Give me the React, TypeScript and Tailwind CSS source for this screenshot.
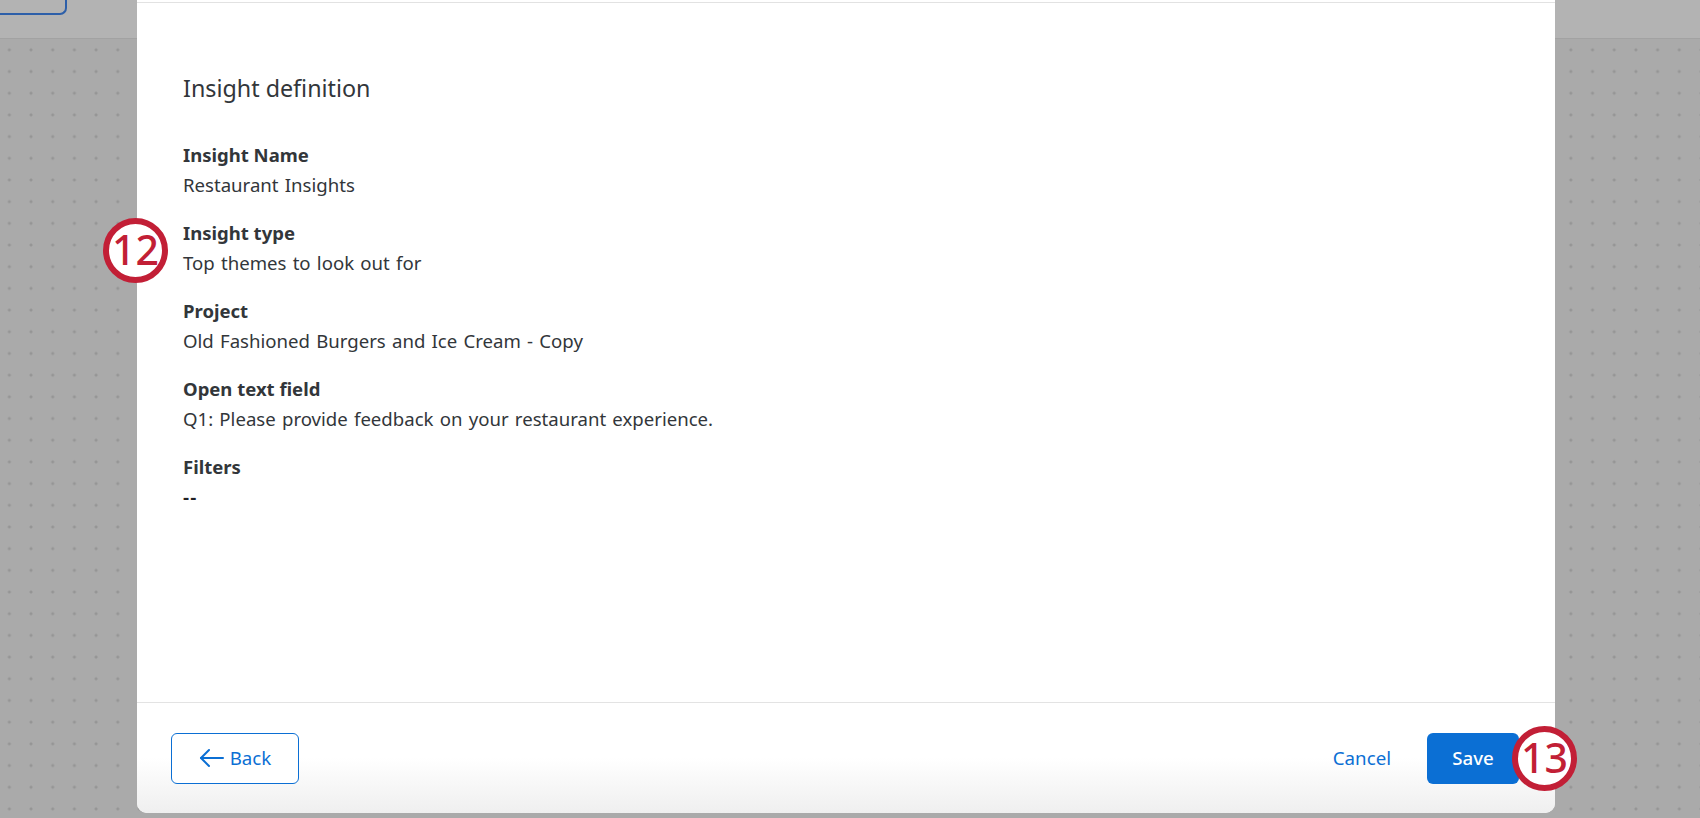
import type { ReactNode } from "react";

type Field = { label: string; value: string };

const fields: Field[] = [
  { label: "Insight Name", value: "Restaurant Insights" },
  { label: "Insight type", value: "Top themes to look out for" },
  { label: "Project", value: "Old Fashioned Burgers and Ice Cream - Copy" },
  { label: "Open text field", value: "Q1: Please provide feedback on your restaurant experience." },
  { label: "Filters", value: "--" },
];

function StepBadge({ n, className }: { n: string; className: string }) {
  return (
    <div
      className={`absolute flex h-[65px] w-[65px] items-center justify-center rounded-full border-[6px] border-[#c21f36] bg-white text-[41px] font-medium leading-none text-[#c21f36] ${className}`}
    >
      <span className="-mt-[2px]">{n}</span>
    </div>
  );
}

function ArrowLeft() {
  return (
    <svg width="25" height="20" viewBox="0 0 25 20" fill="none" stroke="currentColor" strokeWidth="2" strokeLinecap="round" strokeLinejoin="round">
      <path d="M24 10H2" />
      <path d="M10 2L2 10l8 8" />
    </svg>
  );
}

function FieldRow({ label, value }: Field) {
  const empty = value === "--";
  return (
    <div className="flex flex-col">
      <div className="text-[18.5px] font-bold leading-[30px] text-[#32363a]">{label}</div>
      <div
        className={
          empty
            ? "text-[19px] font-semibold leading-[30px] tracking-[0.06em] text-[#1f2124]"
            : "text-[18.6px] leading-[30px] text-[#32363a] [word-spacing:1.4px]"
        }
      >
        {value}
      </div>
    </div>
  );
}

function Footer({ children }: { children: ReactNode }) {
  return (
    <footer className="flex h-[111px] items-center justify-between rounded-b-[10px] border-t border-[#e3e3e3] bg-gradient-to-b from-white via-white to-[#efefef] pl-[34px] pr-[36px]">
      {children}
    </footer>
  );
}

export default function App() {
  return (
    <div className="relative h-[818px] w-[1700px] overflow-hidden bg-[#aaaaaa] font-['Noto_Sans','Open_Sans',sans-serif]">
      {/* page behind the overlay */}
      <div className="flex h-full flex-col">
        <header className="h-[39px] shrink-0 border-b border-[#a2a2a2] bg-[#b3b3b3]">
          <div className="h-[15px] w-[67px] rounded-br-[7px] border-b-2 border-r-2 border-[#2d5fa9]" />
        </header>
        <div className="flex-1 bg-[radial-gradient(circle,#959595_1.2px,transparent_1.8px)] bg-[size:21.7px_21.7px] bg-[position:-1.5px_0px]" />
      </div>

      {/* modal */}
      <div className="absolute left-[137px] top-0 flex h-[813px] w-[1418px] flex-col rounded-b-[10px] bg-white">
        <div className="h-[3px] shrink-0 border-b border-[#e2e2e2]" />
        <main className="flex flex-1 flex-col pl-[46px] pt-[69px]">
          <h2 className="text-[23.3px] leading-[32px] text-[#32363a]">Insight definition</h2>
          <div className="mt-[36px] flex flex-col gap-[18px]">
            {fields.map((f) => (
              <FieldRow key={f.label} {...f} />
            ))}
          </div>
        </main>
        <Footer>
          <button className="flex h-[51px] w-[128px] items-center justify-center gap-[6px] rounded-[6px] border border-[#0b6fd4] bg-white text-[18.7px] text-[#0b6fd4]">
            <ArrowLeft />
            <span>Back</span>
          </button>
          <div className="flex items-center gap-[36px]">
            <button className="text-[18.7px] text-[#0b6fd4]">Cancel</button>
            <button className="h-[51px] w-[92px] rounded-[6px] bg-[#0b6fd4] text-[18.7px] font-medium text-white">Save</button>
          </div>
        </Footer>
      </div>

      <StepBadge n="12" className="left-[103px] top-[218px]" />
      <StepBadge n="13" className="left-[1512px] top-[726px]" />
    </div>
  );
}
